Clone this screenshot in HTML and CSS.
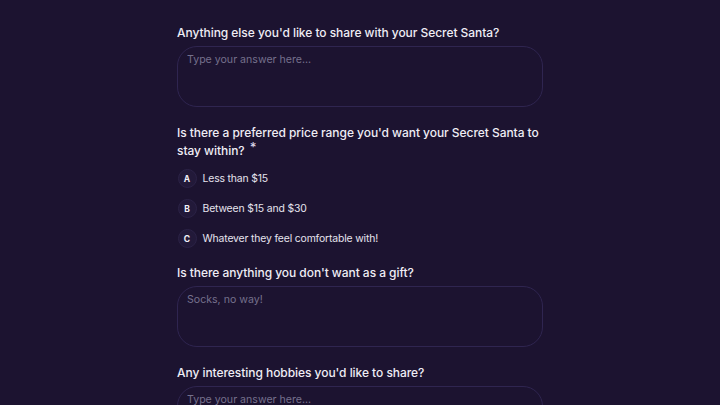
FILE: index.html
```html
<!DOCTYPE html>
<html>
<head>
<meta charset="utf-8">
<link rel="stylesheet" href="styles.css">
</head>
<body>
<main class="form">
  <section class="q">
    <h2 class="label">Anything else you'd like to share with your Secret Santa?</h2>
    <div class="field">Type your answer here...</div>
  </section>
  <section class="q">
    <h2 class="label">Is there a preferred price range you'd want your Secret Santa to stay within? <span class="req">*</span></h2>
    <ul class="options">
      <li class="opt"><span class="key">A</span><span>Less than $15</span></li>
      <li class="opt"><span class="key">B</span><span>Between $15 and $30</span></li>
      <li class="opt"><span class="key">C</span><span>Whatever they feel comfortable with!</span></li>
    </ul>
  </section>
  <section class="q">
    <h2 class="label">Is there anything you don't want as a gift?</h2>
    <div class="field">Socks, no way!</div>
  </section>
  <section class="q">
    <h2 class="label">Any interesting hobbies you'd like to share?</h2>
    <div class="field">Type your answer here...</div>
  </section>
</main>
</body>
</html>
```
FILE: styles.css
```css
html, body {
  margin: 0;
  padding: 0;
  background: #1c1330;
  height: 405px;
  overflow: hidden;
}
body {
  font-family: "Inter", "Noto Sans", sans-serif;
  color: #ecebf2;
}
.form {
  width: 366px;
  margin-left: 177px;
  padding-top: 24px;
  display: flex;
  flex-direction: column;
  gap: 16.5px;
}
.q {
  display: flex;
  flex-direction: column;
}
.label {
  margin: 0;
  font-size: 12px;
  font-weight: 500;
  line-height: 18px;
  letter-spacing: -0.05px;
  color: #efedf5;
}
.req {
  font-size: 13px;
  line-height: 0;
  vertical-align: 3px;
  margin-left: 2px;
  color: #d8d4e6;
}
.field {
  margin-top: 4px;
  height: 61px;
  box-sizing: border-box;
  border: 1px solid #2f2550;
  border-radius: 20px;
  padding: 6px 9px;
  font-size: 10.6px;
  line-height: 14px;
  color: #75708c;
  background: #1c1330;
}
.options {
  list-style: none;
  margin: 10px 0 0 0;
  padding: 0;
  display: flex;
  flex-direction: column;
  gap: 12px;
}
.opt {
  display: flex;
  align-items: center;
  gap: 6px;
  height: 18px;
  font-size: 10.4px;
  line-height: 18px;
  color: #e6e3ee;
  letter-spacing: -0.15px;
}
.key {
  width: 17px;
  height: 17px;
  margin-left: 0.5px;
  border-radius: 50%;
  background: #221939;
  border: 1px solid #2b2246;
  display: flex;
  align-items: center;
  justify-content: center;
  font-size: 8.5px;
  font-weight: 700;
  color: #f2f0f7;
  letter-spacing: 0;
}
```
